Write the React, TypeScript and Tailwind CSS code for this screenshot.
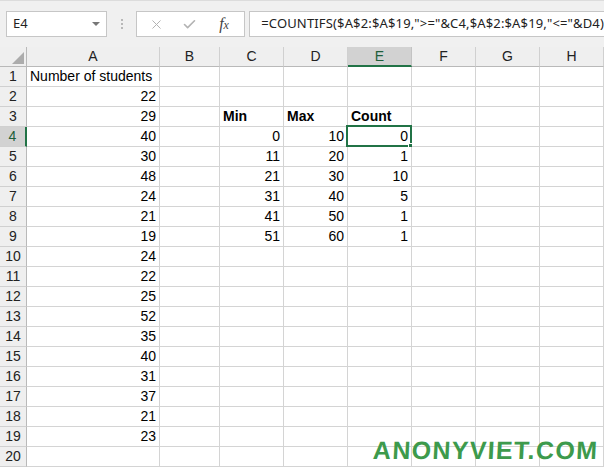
import { X, Check } from "lucide-react";

const COLS = [
  { key: "A", w: "w-[133px]" },
  { key: "B", w: "w-[60px]" },
  { key: "C", w: "w-[64px]" },
  { key: "D", w: "w-[64px]" },
  { key: "E", w: "w-[64px]" },
  { key: "F", w: "w-[64px]" },
  { key: "G", w: "w-[64px]" },
  { key: "H", w: "w-[64px]" },
];

const studentsCol = [
  "Number of students",
  "22", "29", "40", "30", "48", "24", "21", "19", "24",
  "22", "25", "52", "35", "40", "31", "37", "21", "23",
];

const mins = ["0", "11", "21", "31", "41", "51"];
const maxs = ["10", "20", "30", "40", "50", "60"];
const counts = ["0", "1", "10", "5", "1", "1"];

const cellFont = { fontFamily: '"Liberation Sans", Arial, sans-serif' };

function cellAt(row: number, col: string) {
  if (col === "A" && row <= 19) {
    return { text: studentsCol[row - 1], bold: false, right: row > 1 };
  }
  if (row === 3) {
    if (col === "C") return { text: "Min", bold: true, right: false };
    if (col === "D") return { text: "Max", bold: true, right: false };
    if (col === "E") return { text: "Count", bold: true, right: false };
  }
  if (row >= 4 && row <= 9) {
    const i = row - 4;
    if (col === "C") return { text: mins[i], bold: false, right: true };
    if (col === "D") return { text: maxs[i], bold: false, right: true };
    if (col === "E") return { text: counts[i], bold: false, right: true };
  }
  return null;
}

function FormulaBar() {
  return (
    <div className="h-[47px] bg-[#f0f0f0] border-t border-[#dcdcdc] flex items-start pt-[10px]">
      <div className="ml-[6px] w-[102px] h-[26px] bg-white border border-[#c6c6c6] flex items-center justify-between pl-[6px] pr-[6px]">
        <span className="text-[13px] text-[#222]" style={{ fontFamily: '"Noto Sans", sans-serif' }}>
          E4
        </span>
        <span className="w-0 h-0 border-l-[4px] border-r-[4px] border-t-[4px] border-l-transparent border-r-transparent border-t-[#777]" />
      </div>
      <div className="ml-[14px] mt-[8px] flex flex-col gap-[2px]">
        <span className="w-[2px] h-[2px] bg-[#b8b8b8]" />
        <span className="w-[2px] h-[2px] bg-[#b8b8b8]" />
        <span className="w-[2px] h-[2px] bg-[#b8b8b8]" />
      </div>
      <div className="ml-[13px] w-[110px] h-[26px] bg-white border border-[#c6c6c6] flex items-center pl-[12px]">
        <X size={15} strokeWidth={1.6} className="text-[#b3b3b3]" />
        <Check size={15} strokeWidth={2.6} className="text-[#b3b3b3] ml-[18px]" />
        <span
          className="ml-[22px] text-[16px] italic text-[#444] leading-none"
          style={{ fontFamily: '"Liberation Serif", "Times New Roman", serif' }}
        >
          f<span className="text-[12px]">x</span>
        </span>
      </div>
      <div className="ml-[4px] flex-1 h-[26px] bg-white border border-r-0 border-[#c6c6c6] flex items-center pl-[11px]">
        <span
          className="text-[13px] text-[#222] whitespace-nowrap tracking-[0.15px]"
          style={{ fontFamily: '"Noto Sans", sans-serif' }}
        >
          =COUNTIFS($A$2:$A$19,"&gt;="&amp;C4,$A$2:$A$19,"&lt;="&amp;D4)
        </span>
      </div>
    </div>
  );
}

function HeaderRow() {
  return (
    <div className="flex h-[20px]" style={cellFont}>
      <div className="w-[27px] h-[20px] bg-[#efefef] border-r border-b border-[#b9b9b9] flex items-end justify-end pr-[2px] pb-[2px]">
        <svg width="12" height="12" viewBox="0 0 12 12" className="block">
          <polygon points="12,0 12,12 0,12" fill="#acacac" />
        </svg>
      </div>
      {COLS.map((c) => {
        const sel = c.key === "E";
        return (
          <div
            key={c.key}
            className={`${c.w} h-[20px] flex items-center justify-center text-[14px] border-r ${
              sel
                ? "bg-[#d2d2d2] text-[#1e5e3a] border-[#c3c3c3] border-b-2 border-b-[#217346]"
                : "bg-[#efefef] text-[#222] border-[#d0d0d0] border-b border-b-[#b9b9b9]"
            }`}
          >
            {c.key}
          </div>
        );
      })}
    </div>
  );
}

function DataRow({ row }: { row: number }) {
  const selRow = row === 4;
  return (
    <div className="flex h-[20px]" style={cellFont}>
      <div
        className={`w-[27px] h-[20px] flex items-center justify-center text-[14px] border-b border-[#d0d0d0] ${
          selRow
            ? "bg-[#d2d2d2] text-[#1e5e3a] border-r-2 border-r-[#217346]"
            : "bg-[#efefef] text-[#222] border-r border-r-[#b9b9b9]"
        }`}
      >
        {row}
      </div>
      {COLS.map((c) => {
        const cell = cellAt(row, c.key);
        const selected = selRow && c.key === "E";
        return (
          <div
            key={c.key}
            className={`${c.w} h-[20px] relative bg-white border-r border-b border-[#d4d4d4] flex items-center px-[3px] text-[14px] text-black whitespace-nowrap ${
              cell?.right ? "justify-end" : "justify-start"
            } ${cell?.bold ? "font-bold" : ""}`}
          >
            {cell?.text}
            {selected && (
              <div className="absolute -left-[2px] -top-[2px] -right-[1px] -bottom-[1px] border-2 border-[#217346] pointer-events-none">
                <div className="absolute -right-[4px] -bottom-[4px] w-[6px] h-[6px] bg-[#217346] border border-white" />
              </div>
            )}
          </div>
        );
      })}
    </div>
  );
}

export default function App() {
  const rows = Array.from({ length: 20 }, (_, i) => i + 1);
  return (
    <div className="w-[604px] h-[467px] overflow-hidden bg-white relative">
      <FormulaBar />
      <HeaderRow />
      {rows.map((r) => (
        <DataRow key={r} row={r} />
      ))}
      {/* watermark sits over the grid */}
      <div
        className="absolute left-[373px] top-[438px] text-[25px] font-bold text-[#3d9a4c] tracking-[1.3px] leading-none -skew-x-3 pointer-events-none"
        style={{ fontFamily: '"Liberation Sans", Arial, sans-serif' }}
      >
        ANONYVIET.COM
      </div>
    </div>
  );
}
